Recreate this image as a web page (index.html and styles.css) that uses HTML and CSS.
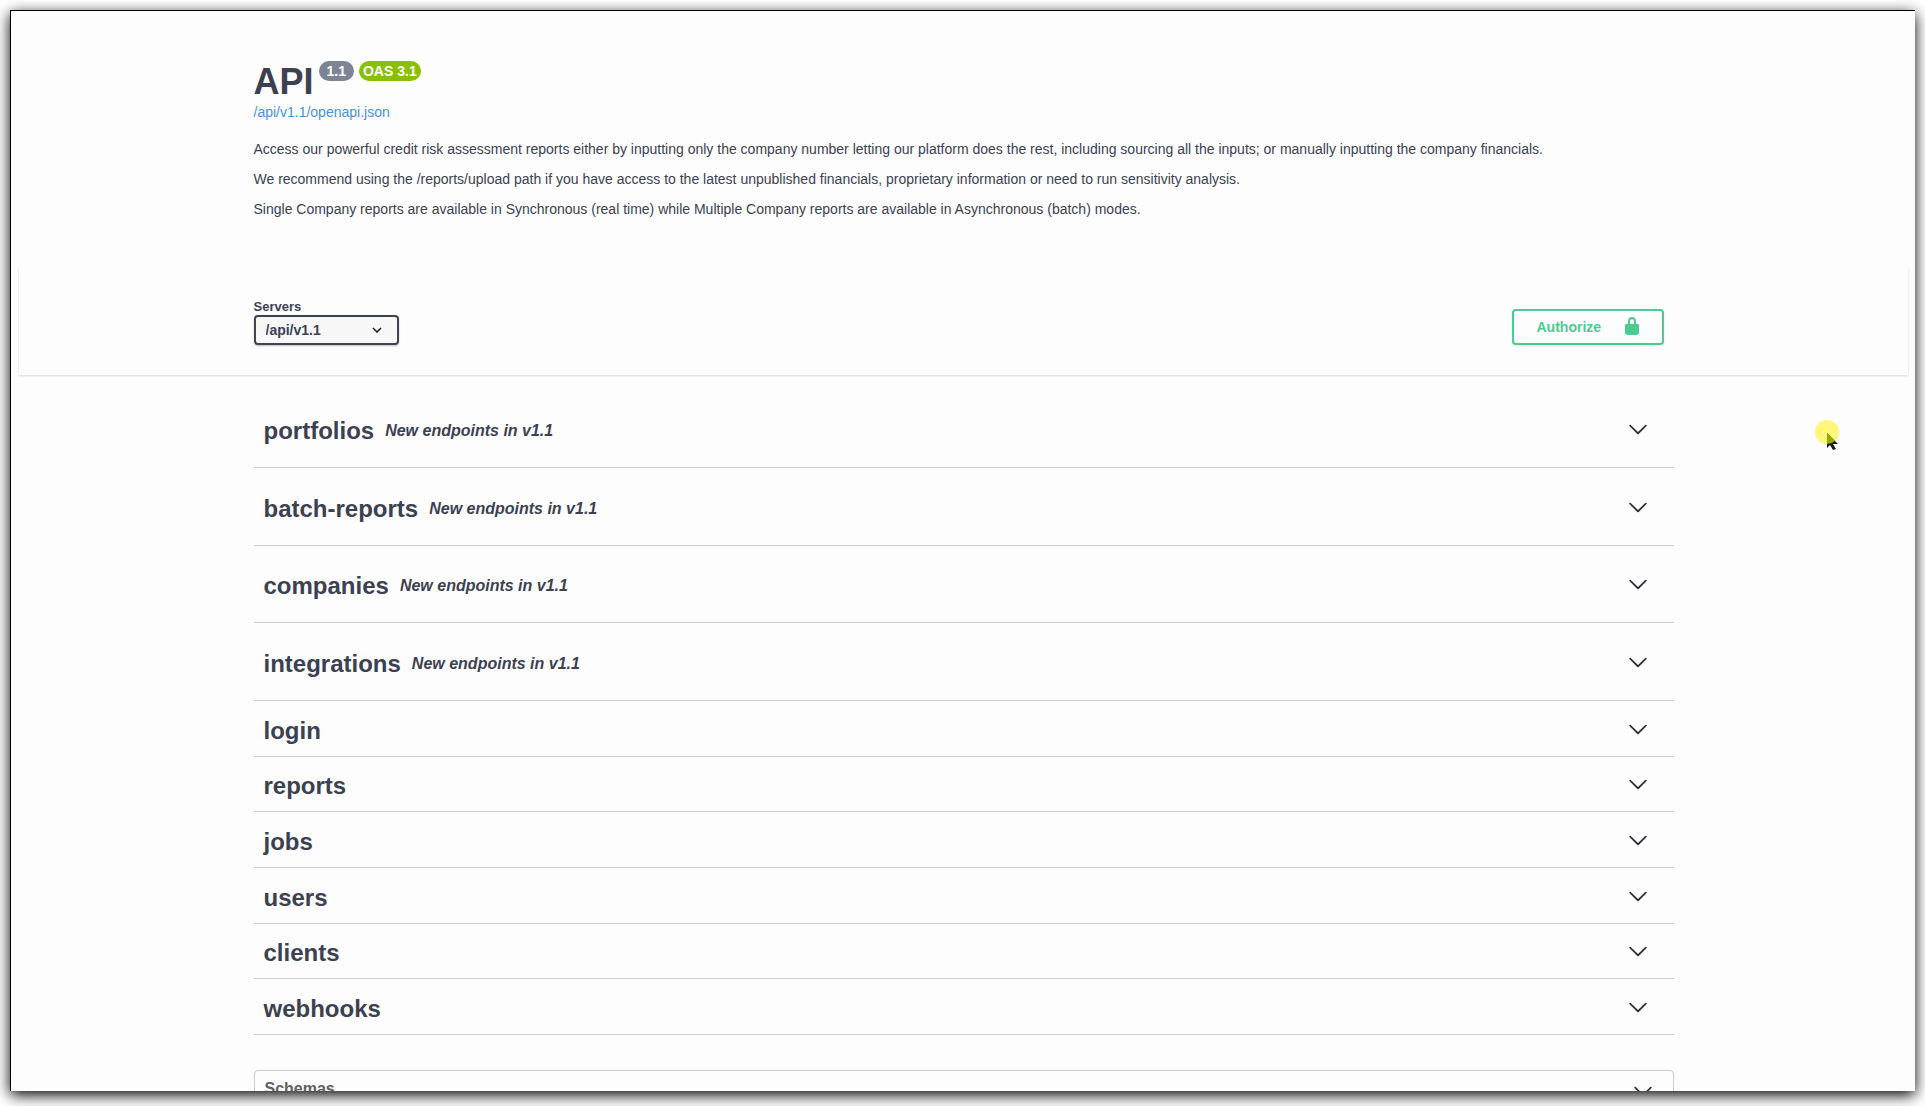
FILE: index.html
```html
<!DOCTYPE html>
<html lang="en">
<head>
<meta charset="utf-8">
<title>API</title>
<link rel="stylesheet" href="styles.css">
</head>
<body>
<svg class="sprite" aria-hidden="true">
  <symbol id="arrow" viewBox="0 0 20 20"><path d="M17.418 6.109c.272-.268.709-.268.979 0s.271.701 0 .969l-7.908 7.830c-.27.268-.707.268-.979 0l-7.908-7.830c-.27-.268-.27-.701 0-.969.271-.268.709-.268.979 0L10 13.250z"/></symbol>
</svg>
<div class="window">
  <header class="wrapper info">
    <div class="title-row">
      <h1 class="title">API</h1>
      <span class="badge">1.1</span>
      <span class="badge badge-oas">OAS 3.1</span>
    </div>
    <a class="spec-link" href="#">/api/v1.1/openapi.json</a>
    <div class="description">
      <p>Access our powerful credit risk assessment reports either by inputting only the company number letting our platform does the rest, including sourcing all the inputs; or manually inputting the company financials.</p>
      <p>We recommend using the /reports/upload path if you have access to the latest unpublished financials, proprietary information or need to run sensitivity analysis.</p>
      <p>Single Company reports are available in Synchronous (real time) while Multiple Company reports are available in Asynchronous (batch) modes.</p>
    </div>
  </header>

  <section class="scheme">
    <div class="wrapper scheme-inner">
      <div class="servers">
        <label class="servers-label" for="servers">Servers</label>
        <select class="servers-select" id="servers"><option>/api/v1.1</option></select>
      </div>
      <button class="authorize" type="button">
        <span>Authorize</span>
        <svg class="lock" viewBox="0 0 20 20"><path d="M15.800 8H14V5.600C14 2.703 12.665 1 10 1 7.334 1 6 2.703 6 5.600V8H4c-.553 0-1 .646-1 1.199V17c0 .549.428 1.139.951 1.307l1.197.387C5.672 18.861 6.550 19 7.100 19h5.800c.549 0 1.428-.139 1.951-.307l1.196-.387c.524-.167.953-.757.953-1.306V9.199C17 8.646 16.352 8 15.800 8zM12 8H8V5.199C8 3.754 8.797 3 10 3c1.203 0 2 .754 2 2.199V8z"/></svg>
      </button>
    </div>
  </section>

  <main class="wrapper">
    <div class="tags tags-described">
      <button class="tag" type="button"><span class="tag-name">portfolios</span><em class="tag-note">New endpoints in v1.1</em><svg class="arrow"><use href="#arrow"/></svg></button>
      <button class="tag" type="button"><span class="tag-name">batch-reports</span><em class="tag-note">New endpoints in v1.1</em><svg class="arrow"><use href="#arrow"/></svg></button>
      <button class="tag" type="button"><span class="tag-name">companies</span><em class="tag-note">New endpoints in v1.1</em><svg class="arrow"><use href="#arrow"/></svg></button>
      <button class="tag" type="button"><span class="tag-name">integrations</span><em class="tag-note">New endpoints in v1.1</em><svg class="arrow"><use href="#arrow"/></svg></button>
    </div>
    <div class="tags tags-plain">
      <button class="tag" type="button"><span class="tag-name">login</span><svg class="arrow"><use href="#arrow"/></svg></button>
      <button class="tag" type="button"><span class="tag-name">reports</span><svg class="arrow"><use href="#arrow"/></svg></button>
      <button class="tag" type="button"><span class="tag-name">jobs</span><svg class="arrow"><use href="#arrow"/></svg></button>
      <button class="tag" type="button"><span class="tag-name">users</span><svg class="arrow"><use href="#arrow"/></svg></button>
      <button class="tag" type="button"><span class="tag-name">clients</span><svg class="arrow"><use href="#arrow"/></svg></button>
      <button class="tag" type="button"><span class="tag-name">webhooks</span><svg class="arrow"><use href="#arrow"/></svg></button>
    </div>
    <section class="models">
      <button class="models-toggle" type="button"><span>Schemas</span><svg class="arrow"><use href="#arrow"/></svg></button>
    </section>
  </main>
</div>
<svg class="pointer" viewBox="0 0 26 32" aria-hidden="true">
  <circle cx="12" cy="12" r="12" fill="#fff67a"/>
  <path d="M12 13v15l3-3 3 5 3-1-3-5h5z" fill="#1b1b1b"/>
  <path d="M12 13v11A12 12 0 0 0 20 21z" fill="#8fae00"/>
</svg>
</body>
</html>
```
FILE: styles.css
```css
* { box-sizing: border-box; }

body {
  margin: 0;
  padding: 10px 10px 15px;
  height: 100vh;
  overflow: hidden;
  background: #fff;
  color: #3b4151;
  font: 14px/16px "Liberation Sans", Arial, sans-serif;
}

button, select { font: inherit; color: inherit; margin: 0; }
button { cursor: pointer; }

.sprite { position: absolute; width: 0; height: 0; }

.window {
  height: 100%;
  overflow: hidden;
  padding: 0 7px 0 8px;
  background: #fdfdfd;
  border: solid #000;
  border-width: 1px 0 0 1px;
  box-shadow: 0 4px 14px #000;
}

.wrapper {
  width: 100%;
  max-width: 1460px;
  margin: 0 auto;
  padding: 0 20px;
}

.info { padding-top: 48px; padding-bottom: 36px; }
.title-row { display: flex; align-items: flex-start; gap: 5px; }
.title { margin: 0; font-size: 36px; line-height: 45px; }

.badge {
  margin-top: 2px;
  padding: 0 8px;
  border-radius: 10px;
  background: #7d8492;
  color: #fff;
  font-weight: 700;
  line-height: 20px;
}
.badge-oas { padding: 0 4px; background: #89bf04; }

.spec-link { color: #4990e2; text-decoration: none; }
.description { margin-top: 21px; }
.description p { margin: 0 0 14px; }

.scheme {
  padding: 32px 0 30px;
  background: #fdfdfd;
  box-shadow: 0 1px 2px rgba(0, 0, 0, .15);
}
.scheme-inner { display: flex; justify-content: space-between; align-items: flex-end; }
.servers { display: flex; flex-direction: column; }
.servers-label { font-size: 13px; font-weight: 700; }
.servers-select {
  width: 145px;
  height: 30px;
  padding: 0 10px;
  appearance: none;
  border: 2px solid #41444e;
  border-radius: 4px;
  background: #f7f7f7 url("data:image/svg+xml,%3Csvg xmlns='http://www.w3.org/2000/svg' viewBox='0 0 10 6'%3E%3Cpath d='M1 1l4 4 4-4' fill='none' stroke='%23222' stroke-width='1.600'/%3E%3C/svg%3E") right 15px center / 10px 6px no-repeat;
  box-shadow: 0 1px 2px rgba(0, 0, 0, .25);
  font-weight: 700;
}
.authorize {
  display: flex;
  align-items: center;
  justify-content: space-between;
  width: 152px;
  height: 36px;
  margin-right: 10px;
  padding: 0 20px 0 23px;
  border: 2px solid #49cc90;
  border-radius: 4px;
  background: transparent;
  box-shadow: 0 1px 2px rgba(0, 0, 0, .1);
  color: #49cc90;
  font-weight: 700;
}
.lock { width: 20px; height: 20px; margin-bottom: 2px; fill: currentColor; }

.tags { display: grid; grid-auto-rows: 1fr; }
.tags-described { padding-top: 15px; min-height: 326px; }
.tags-plain { min-height: 334px; }
.tag {
  display: flex;
  align-items: center;
  width: 100%;
  padding: 5px 26px 0 10px;
  border: 0;
  border-bottom: 1px solid #cbcccf;
  background: transparent;
  text-align: left;
}
.tag-name { font-size: 24px; font-weight: 700; line-height: 28px; }
.tag-note { margin-left: 11px; font-size: 16px; font-weight: 700; }
.arrow {
  width: 20px;
  height: 20px;
  margin: 0 0 4px auto;
  fill: #20242c;
  stroke: #20242c;
  stroke-width: .3;
}

.models { margin-top: 35px; border: 1px solid #cbcccf; border-radius: 4px; }
.models-toggle {
  display: flex;
  align-items: flex-start;
  width: 100%;
  height: 42px;
  padding: 10px 20px 10px 10px;
  border: 0;
  background: transparent;
  color: #606060;
  font-size: 16px;
  font-weight: 700;
}

.pointer { position: absolute; left: 1815px; top: 420px; width: 26px; height: 32px; }
```
